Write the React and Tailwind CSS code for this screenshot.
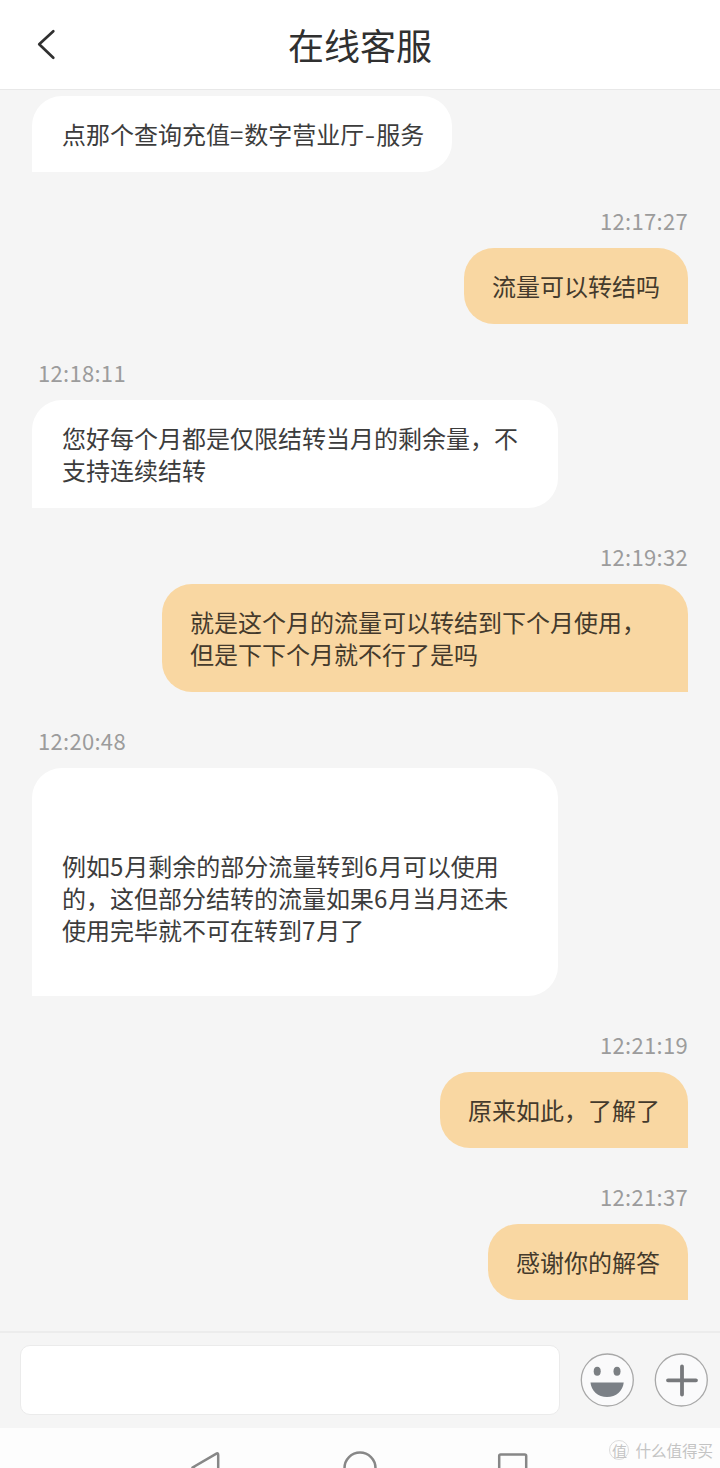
import clsx from "clsx";

const messages = [
    { id: 1, from: "agent", lines: ["点那个查询充值=数字营业厅-服务"] },
    { id: 2, from: "me", time: "12:17:27", lines: ["流量可以转结吗"] },
    {
        id: 3,
        from: "agent",
        time: "12:18:11",
        lines: ["您好每个月都是仅限结转当月的剩余量，不", "支持连续结转"],
    },
    {
        id: 4,
        from: "me",
        time: "12:19:32",
        lines: ["就是这个月的流量可以转结到下个月使用，", "但是下下个月就不行了是吗"],
    },
    {
        id: 5,
        from: "agent",
        time: "12:20:48",
        tall: true,
        lines: [
            "例如5月剩余的部分流量转到6月可以使用",
            "的，这但部分结转的流量如果6月当月还未",
            "使用完毕就不可在转到7月了",
        ],
    },
    { id: 6, from: "me", time: "12:21:19", lines: ["原来如此，了解了"] },
    { id: 7, from: "me", time: "12:21:37", lines: ["感谢你的解答"] },
];

function Line({ text }) {
    return (
        <p className="whitespace-nowrap">
            {text.split(/([=\d-])/).map((part, i) => {
                if (part === "-") {
                    return (
                        <span key={i} className="inline-block w-3 origin-center scale-x-125 text-center">
                            -
                        </span>
                    );
                }
                return (
                    <span key={i} className={/^[=\d]$/.test(part) ? "tracking-[1px]" : undefined}>
                        {part}
                    </span>
                );
            })}
        </p>
    );
}

function Message({ from, time, tall, lines }) {
    const mine = from === "me";

    return (
        <div className={clsx("flex flex-col", mine ? "items-end" : "items-start")}>
            {time && (
                <div className="flex h-[76px] items-center pt-[21px] text-[22px] leading-[26px] tracking-[0.3px] text-[#9c9c9c]">
                    <span className={mine ? undefined : "pl-1.5"}>{time}</span>
                </div>
            )}
            <div
                className={clsx(
                    "rounded-t-[30px] text-2xl leading-8",
                    mine
                        ? "rounded-bl-[30px] bg-[#f9d7a2] px-7 text-[#443a2c]"
                        : "rounded-br-[30px] bg-white pr-7 pl-[30px] text-[#3c3c3c]",
                    tall ? "pt-[82px] pb-[50px]" : "py-[22px]",
                    lines.length > 1 && "w-[526px]"
                )}
            >
                {lines.map((line) => (
                    <Line key={line} text={line} />
                ))}
            </div>
        </div>
    );
}

function SmileIcon() {
    return (
        <svg width="54" height="54" viewBox="0 0 54 54">
            <circle cx="27.3" cy="27" r="26" fill="#fafafb" stroke="#a8a8a8" strokeWidth="1.3" />
            <ellipse cx="17.2" cy="18.3" rx="3.5" ry="4.5" fill="#7b7f83" />
            <ellipse cx="37" cy="18.3" rx="3.5" ry="4.5" fill="#7b7f83" />
            <path d="M10.5 29.5h33.2C43 38 36 44 27 44S11.2 38 10.5 29.5z" fill="#7b8086" />
        </svg>
    );
}

function PlusIcon() {
    return (
        <svg width="54" height="54" viewBox="0 0 54 54">
            <circle cx="27.3" cy="27" r="26" fill="#fafafb" stroke="#a8a8a8" strokeWidth="1.3" />
            <path d="M28 13.5v28M14 27.3h28" stroke="#77797c" strokeWidth="3.8" strokeLinecap="round" />
        </svg>
    );
}

export default function App() {
    return (
        <div className="relative flex h-[1468px] w-[720px] flex-col overflow-hidden bg-[#f5f5f5] font-['Noto_Sans_CJK_SC',sans-serif]">
            {/* Header */}
            <header className="grid h-[90px] shrink-0 grid-cols-[1fr_auto_1fr] items-center border-b border-[#e8e8e8] bg-white">
                <svg className="ml-9" width="20" height="32" viewBox="0 0 20 32" fill="none">
                    <path d="M17.3 2.2 3.2 15.2l14.1 13.5" stroke="#303030" strokeWidth="2.7" strokeLinecap="round" strokeLinejoin="round" />
                </svg>
                <h1 className="pb-0.5 text-4xl leading-10 text-[#303030]">在线客服</h1>
                <div></div>
            </header>

            {/* Messages */}
            <main className="flex-1 px-8 pt-[5.5px]">
                {messages.map((m) => (
                    <Message key={m.id} {...m} />
                ))}
            </main>

            {/* Input bar */}
            <footer className="flex h-[97px] shrink-0 items-center border-t-2 border-[#ececec] pr-3 pb-0.5 pl-5">
                <input
                    type="text"
                    className="h-[70px] w-[540px] rounded-[10px] border border-[#ebebeb] bg-white px-4 text-2xl outline-none"
                />
                <button className="ml-5">
                    <SmileIcon />
                </button>
                <button className="ml-5">
                    <PlusIcon />
                </button>
            </footer>

            {/* System navigation */}
            <nav className="flex h-10 shrink-0 items-start justify-center gap-[118px] overflow-hidden bg-[#fdfdfd] pt-[22px] text-[#878787]">
                <svg width="36" height="36" viewBox="0 0 36 36" fill="none" stroke="currentColor" strokeWidth="2.5">
                    <path d="M4.5 17.5 28 3.8Q30.2 2.5 30.2 5v26q0 2.5-2.2 1.5z" strokeLinejoin="round" />
                </svg>
                <svg width="36" height="36" viewBox="0 0 36 36" fill="none" stroke="currentColor" strokeWidth="2.5">
                    <circle cx="18" cy="18" r="15.5" />
                </svg>
                <svg width="36" height="36" viewBox="0 0 36 36" fill="none" stroke="currentColor" strokeWidth="2.5">
                    <rect x="3.2" y="4.5" width="27" height="27" rx="1.5" />
                </svg>
            </nav>

            {/* Watermark */}
            <div className="absolute right-[7px] bottom-2 flex items-center gap-1.5 text-[#c4c4c4]">
                <span className="flex size-5 items-center justify-center rounded-full border border-[#dcdcdc] text-[15px] leading-none">
                    值
                </span>
                <span className="text-[15.5px] leading-5">什么值得买</span>
            </div>
        </div>
    );
}
